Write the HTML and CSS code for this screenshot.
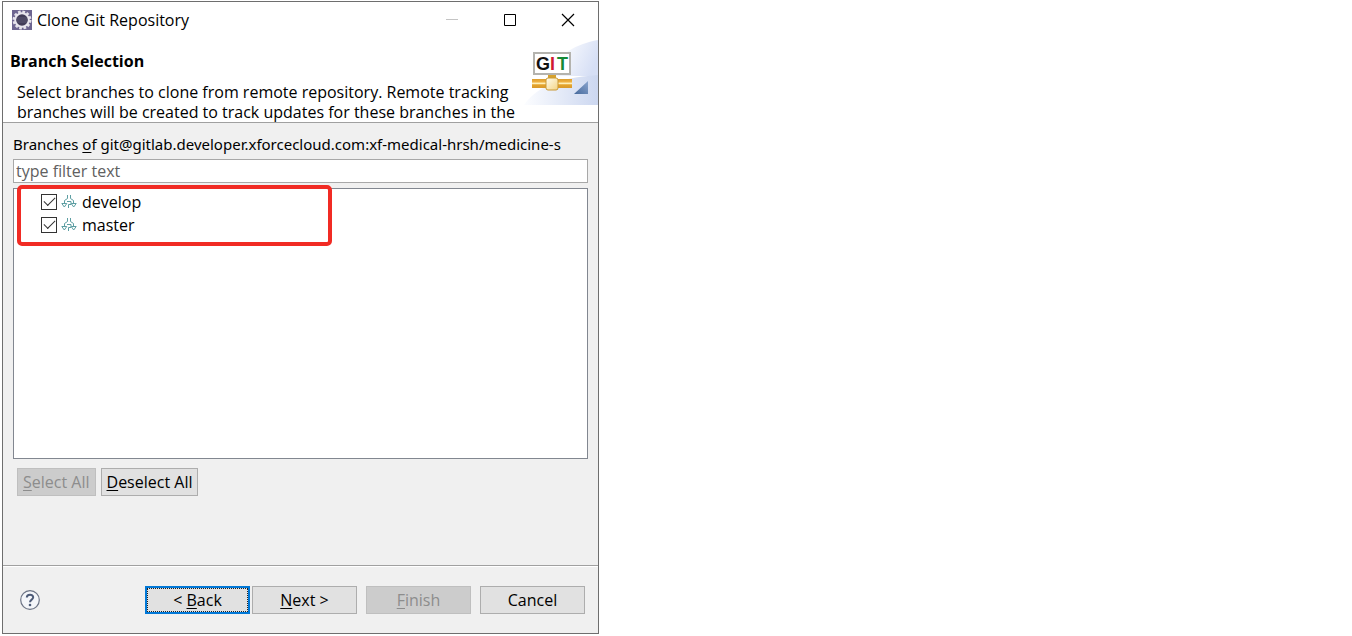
FILE: index.html
```html
<!DOCTYPE html>
<html lang="en">
<head>
<meta charset="utf-8">
<meta name="viewport" content="width=device-width, initial-scale=1">
<title>Clone Git Repository</title>
<link rel="stylesheet" href="styles.css">
</head>
<body>
<form class="dialog" onsubmit="return false">
  <div class="titlebar">
    <svg class="app-icon" viewBox="0 0 20 20" aria-hidden="true">
      <rect width="20" height="20" fill="#6d6590"/>
      <circle cx="10" cy="10" r="8" fill="none" stroke="#e4e2ea" stroke-width="3" stroke-dasharray="2.6 1.6"/>
      <circle cx="10" cy="10" r="6.8" fill="#413c58" stroke="#e8e6ee" stroke-width="2"/>
      <path d="M5 8h10M4 10h12M5 12h10" stroke="#5c5875"/>
    </svg>
    <h1 class="title">Clone Git Repository</h1>
    <button class="window-button" type="button" aria-label="Minimize" disabled>
      <svg viewBox="0 0 14 14"><path d="M1 6.5h12" stroke="#c4c4c4"/></svg>
    </button>
    <button class="window-button" type="button" aria-label="Maximize">
      <svg viewBox="0 0 14 14"><path d="M1.5 1.5h11v11h-11z" fill="none" stroke="#000"/></svg>
    </button>
    <button class="window-button" type="button" aria-label="Close">
      <svg viewBox="0 0 14 14"><path d="M1 1l12 12M13 1L1 13" stroke="#000" stroke-width="1.2"/></svg>
    </button>
  </div>

  <header class="banner">
    <div class="banner-text">
      <h2 class="heading">Branch Selection</h2>
      <p class="message">Select branches to clone from remote repository. Remote tracking branches will be created to track updates for these branches in the</p>
    </div>
    <svg class="banner-image" viewBox="0 0 74 65" role="img" aria-label="GIT">
      <defs>
        <linearGradient id="sky" x1="0" y1="0.2" x2="1" y2="0.5">
          <stop offset="0.2" stop-color="#fff"/>
          <stop offset="1" stop-color="#d6dff5"/>
        </linearGradient>
        <linearGradient id="ground" x1="0" y1="0" x2="1" y2="0">
          <stop offset="0" stop-color="#fcfdff"/>
          <stop offset="1" stop-color="#ccd7f0"/>
        </linearGradient>
        <linearGradient id="pipe" x1="0" y1="0" x2="0" y2="1">
          <stop offset="0" stop-color="#dc9c2c"/>
          <stop offset="0.3" stop-color="#eeb040"/>
          <stop offset="0.5" stop-color="#fff0b8"/>
          <stop offset="0.65" stop-color="#e5a42c"/>
          <stop offset="1" stop-color="#d8992c"/>
        </linearGradient>
        <linearGradient id="node" x1="0" y1="0" x2="1" y2="1">
          <stop offset="0" stop-color="#fffdf0"/>
          <stop offset="1" stop-color="#f4d484"/>
        </linearGradient>
        <linearGradient id="corner" x1="0" y1="1" x2="1" y2="0">
          <stop offset="0" stop-color="#46699c"/>
          <stop offset="1" stop-color="#8aa5ce"/>
        </linearGradient>
      </defs>
      <path d="M74 0C52 4 34 14 20 36H74z" fill="url(#sky)"/>
      <path d="M0 65C10 50 30 38 74 35V65z" fill="url(#ground)"/>
      <rect x="10" y="13" width="36" height="21" fill="#fff" stroke="#b4b3ae" stroke-width="2"/>
      <text class="logo-text" x="12" y="30" fill="#111">G</text>
      <text class="logo-text" x="26" y="30" fill="#d01832">I</text>
      <text class="logo-text" x="33" y="30" fill="#168a35">T</text>
      <rect x="24" y="35" width="8" height="5" fill="#d6a12c"/>
      <rect x="8" y="39" width="40" height="9" fill="url(#pipe)"/>
      <rect x="22" y="38" width="12" height="12" rx="2" fill="url(#node)" stroke="#c99a38"/>
      <path d="M50 54L64 41V54z" fill="url(#corner)"/>
    </svg>
  </header>

  <main class="content">
    <label class="tree-label" for="filter">Branches <u>o</u>f git@gitlab.developer.xforcecloud.com:xf-medical-hrsh/medicine-s</label>
    <input class="filter" id="filter" type="text" placeholder="type filter text">
    <div class="tree">
      <ul class="branches">
        <li>
          <label class="branch"><input class="check" type="checkbox" checked>
            <svg class="branch-icon" viewBox="0 0 16 16" aria-hidden="true"><g fill="none" stroke="#5c9ea2"><path d="M6.5 1v3.5L3.500 6.500V9M9.500 1v3.500l3 2V9M.8 9.500h5L3.300 13zM10.200 9.500h5L12.700 13zM6 7.500h4v3H7.500V14"/></g></svg>
            <span>develop</span></label>
        </li>
        <li>
          <label class="branch"><input class="check" type="checkbox" checked>
            <svg class="branch-icon" viewBox="0 0 16 16" aria-hidden="true"><g fill="none" stroke="#5c9ea2"><path d="M6.5 1v3.5L3.500 6.500V9M9.500 1v3.500l3 2V9M.8 9.500h5L3.300 13zM10.200 9.500h5L12.700 13zM6 7.500h4v3H7.500V14"/></g></svg>
            <span>master</span></label>
        </li>
      </ul>
      <div class="highlight"></div>
    </div>
    <div class="selection-actions">
      <button class="button" type="button" disabled><u>S</u>elect All</button>
      <button class="button" type="button"><u>D</u>eselect All</button>
    </div>
  </main>

  <footer class="footer">
    <button class="help" type="button" aria-label="Help">
      <svg viewBox="0 0 20 20"><circle cx="10" cy="10" r="9.3" fill="#f4f6fa" stroke="#6c7486" stroke-width="1.2"/><path d="M6.8 7.5C6.8 3.8 13.2 3.8 13.2 7.3C13.2 9.7 10 9.5 10 12.3" fill="none" stroke="#4d5b78" stroke-width="2"/><circle cx="10" cy="15" r="1.3" fill="#4d5b78"/></svg>
    </button>
    <div class="navigation">
      <button class="button wide primary" type="button">&lt; <u>B</u>ack</button>
      <button class="button wide" type="button"><u>N</u>ext &gt;</button>
    </div>
    <button class="button wide" type="button" disabled><u>F</u>inish</button>
    <button class="button wide" type="button">Cancel</button>
  </footer>
</form>
</body>
</html>
```
FILE: styles.css
```css
* {
  box-sizing: border-box;
}

body {
  margin: 0;
  padding: 1px 2px 2px;
  background: #fff;
  color: #000;
  font: 16px/20px "Open Sans", "Noto Sans", sans-serif;
}

button,
input {
  font: inherit;
  color: inherit;
}

h1,
h2,
p,
ul {
  margin: 0;
  padding: 0;
}

u {
  text-underline-offset: 2px;
}

.dialog {
  display: flex;
  flex-direction: column;
  max-width: 597px;
  min-height: calc(100vh - 3px);
  border: 1px solid #6e6e6e;
  background: #f0f0f0;
}

.titlebar {
  display: flex;
  align-items: center;
  height: 38px;
  padding: 0 1px 2px 9px;
  background: #fff;
}

.app-icon {
  width: 20px;
  height: 20px;
}

.title {
  flex: 1;
  padding-left: 5px;
  font-size: 16px;
  font-weight: 400;
}

.window-button {
  display: grid;
  place-items: center;
  width: 58px;
  height: 36px;
  padding: 0;
  border: 0;
  background: none;
}

.window-button svg {
  width: 14px;
  height: 14px;
}

.banner {
  display: flex;
  justify-content: space-between;
  height: 83px;
  border-bottom: 1px solid #a0a0a0;
  background: #fff;
}

.banner-text {
  flex: 1;
  min-width: 0;
  padding: 11px 0 0 7px;
}

.heading {
  font-size: 16px;
  font-weight: 700;
}

.message {
  max-height: 40px;
  margin-top: 11px;
  padding-left: 7px;
  overflow: hidden;
}

.banner-image {
  flex: none;
  width: 74px;
  height: 65px;
}

.logo-text {
  font: 700 18px "Liberation Sans", sans-serif;
}

.content {
  display: flex;
  flex: 1;
  flex-direction: column;
  padding: 11px 10px 0;
}

.tree-label {
  font-family: "Noto Sans", "Open Sans", sans-serif;
  font-size: 15px;
  white-space: nowrap;
}

.filter {
  height: 24px;
  margin-top: 5px;
  padding: 0 2px;
  border: 1px solid #a8a8a8;
  border-radius: 0;
  background: #fff;
}

.filter::placeholder {
  color: #606060;
  opacity: 1;
}

.tree {
  position: relative;
  height: 271px;
  margin-top: 5px;
  padding: 1px 0 0 27px;
  border: 1px solid #828790;
  background: #fff;
}

.branches {
  list-style: none;
}

.branch {
  display: flex;
  align-items: center;
  width: fit-content;
  height: 23px;
}

.check {
  appearance: none;
  display: grid;
  place-items: center;
  width: 16px;
  height: 16px;
  margin: 0;
  border: 1px solid #333;
  background: #fff;
}

.check:checked::before {
  content: "";
  width: 10px;
  height: 5px;
  margin-bottom: 3px;
  border: solid #333;
  border-width: 0 0 1px 1px;
  transform: rotate(-45deg);
}

.branch-icon {
  width: 16px;
  height: 16px;
  margin: 0 5px 0 4px;
}

.highlight {
  position: absolute;
  top: -4px;
  left: 3px;
  width: 315px;
  height: 61px;
  border: 4px solid #f12b24;
  border-radius: 5px;
  pointer-events: none;
}

.selection-actions {
  display: flex;
  gap: 5px;
  padding: 9px 4px;
}

.button {
  height: 28px;
  padding: 0 5px;
  border: 1px solid #adadad;
  border-radius: 0;
  background: #e1e1e1;
  white-space: nowrap;
}

.button:disabled {
  border-color: #bfbfbf;
  background: #ccc;
  color: #8d8d8d;
}

.wide {
  width: 105px;
}

.button.primary {
  border: 2px solid #0078d7;
  outline: 1px dotted #222;
  outline-offset: -3px;
}

.footer {
  display: flex;
  align-items: center;
  gap: 9px;
  height: 68px;
  padding: 0 13px 0 17px;
  border-top: 1px solid #a0a0a0;
  box-shadow: inset 0 1px #fff;
}

.help {
  width: 20px;
  height: 20px;
  margin-right: auto;
  padding: 0;
  border: 0;
  background: none;
}

.help svg {
  display: block;
}

.navigation {
  display: flex;
  gap: 2px;
}
```
